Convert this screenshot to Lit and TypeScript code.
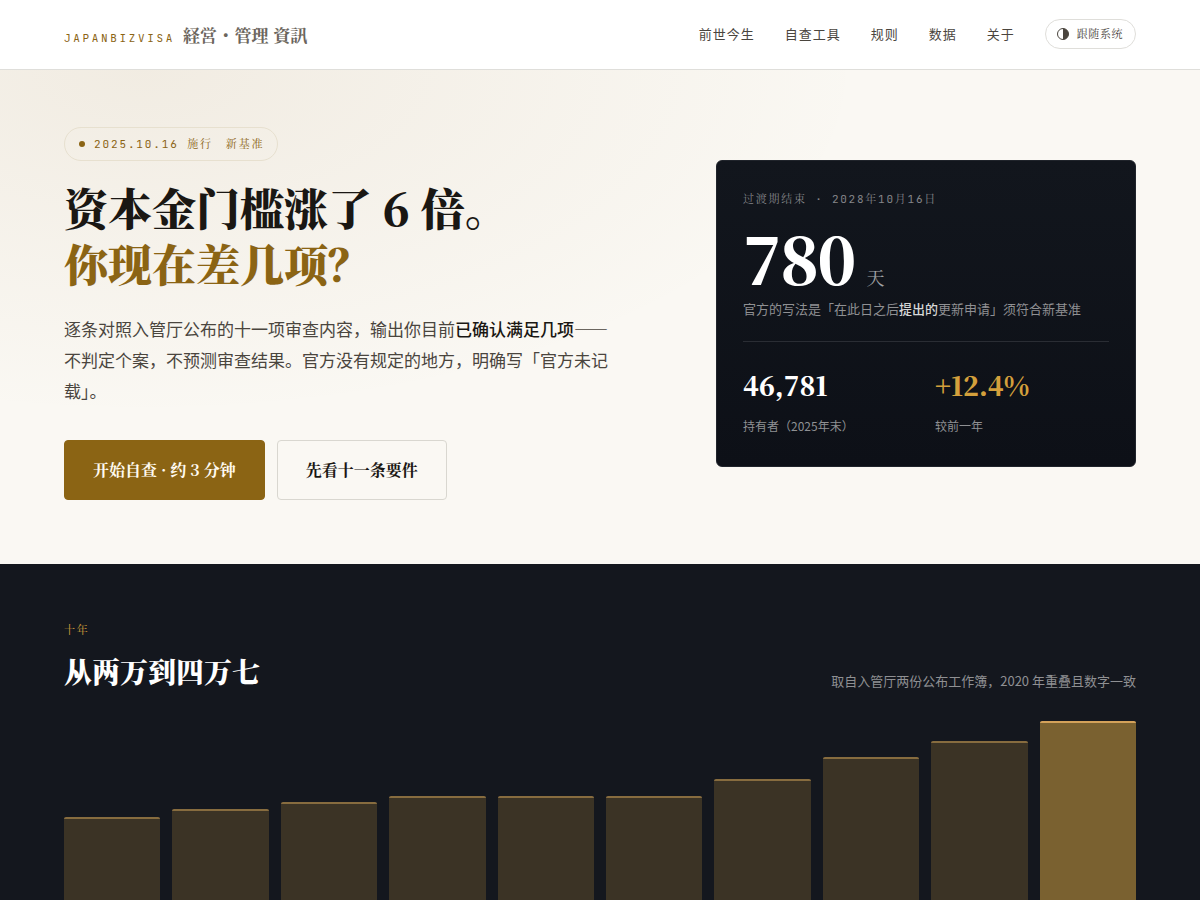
import { LitElement, html, css } from "lit";
import { customElement } from "lit/decorators.js";
import { classMap } from "lit/directives/class-map.js";

const holders = [
  { year: 2016, count: 21877 },
  { year: 2017, count: 24033 },
  { year: 2018, count: 25670 },
  { year: 2019, count: 27249 },
  { year: 2020, count: 27235 },
  { year: 2021, count: 27197 },
  { year: 2022, count: 31808 },
  { year: 2023, count: 37510 },
  { year: 2024, count: 41615 },
  { year: 2025, count: 46781 },
];
const peak = Math.max(...holders.map((h) => h.count));

@customElement("app-root")
export class AppRoot extends LitElement {
  static styles = css`
    :host {
      --serif: "Noto Serif CJK SC", "Liberation Serif", serif;
      --serif-jp: "Noto Serif CJK JP", "Liberation Serif", serif;
      --sans: "Noto Sans CJK SC", sans-serif;
      --mono: "JetBrains Mono", "Liberation Mono", "Noto Serif CJK SC", monospace;
      --gold: #8b6414;
      --ink: #1a1713;
      display: block;
      min-height: 100vh;
      background: #faf8f3;
      color: var(--ink);
      font-family: var(--sans);
    }
    * {
      box-sizing: border-box;
      margin: 0;
    }
    a {
      color: inherit;
      text-decoration: none;
    }
    .header {
      display: flex;
      align-items: center;
      justify-content: space-between;
      padding: 19px 64px 20px;
      background: #fff;
      border-bottom: 1px solid #dfdeda;
    }
    .brand {
      display: flex;
      align-items: baseline;
      gap: 8px;
      padding-top: 2px;
    }
    .brand-en {
      font: 400 11px/16px var(--mono);
      letter-spacing: 0.24em;
      color: var(--gold);
    }
    .brand-jp {
      font: 700 17px/24px var(--serif-jp);
      letter-spacing: 0.01em;
      color: #6b655c;
    }
    .nav {
      display: flex;
      align-items: center;
      gap: 30px;
      font-size: 13px;
      line-height: 20px;
      letter-spacing: 1px;
      color: #4a453e;
    }
    .theme {
      display: flex;
      align-items: center;
      gap: 8px;
      height: 30px;
      padding: 0 12px 0 11px;
      border: 1px solid #dfdeda;
      border-radius: 15px;
      background: none;
      color: #4a453e;
      font: 400 11px/16px var(--mono);
      letter-spacing: 0.05em;
    }
    .theme svg {
      width: 12px;
      height: 12px;
    }
    .hero {
      display: grid;
      grid-template-columns: minmax(0, 1fr) 420px;
      align-items: center;
      gap: 64px;
      padding: 57px 64px 64px;
      background: radial-gradient(ellipse 60% 70% at 12% 0, rgba(139, 95, 30, 0.08), transparent), #faf8f3;
    }
    .copy {
      display: flex;
      flex-direction: column;
      align-items: flex-start;
    }
    .pill {
      display: flex;
      align-items: center;
      gap: 9px;
      height: 34px;
      padding: 0 13px 0 14px;
      border: 1px solid #e7e0cf;
      border-radius: 17px;
      color: var(--gold);
      font: 400 11px/16px var(--mono);
      letter-spacing: 0.17em;
      white-space: pre;
    }
    .dot {
      width: 6px;
      height: 6px;
      border-radius: 50%;
      background: var(--gold);
    }
    .title {
      margin-top: 18px;
      font: 900 44px/56px var(--serif);
    }
    .accent {
      display: block;
      color: var(--gold);
    }
    .lead {
      max-width: 545px;
      margin-top: 22px;
      font-size: 17px;
      line-height: 31px;
      color: #4a453e;
    }
    .lead strong {
      font-weight: 500;
      color: var(--ink);
    }
    .actions {
      display: flex;
      gap: 12px;
      margin-top: 34px;
    }
    .button {
      display: flex;
      align-items: center;
      height: 60px;
      padding: 0 28px;
      border: 1px solid #d9d7d0;
      border-radius: 4px;
      font: 700 16px/24px var(--serif);
    }
    .primary {
      border-color: var(--gold);
      background: var(--gold);
      color: #fffaf0;
    }
    .card {
      padding: 28px 26px 30px;
      border: 1px solid #20242b;
      border-radius: 6px;
      background: linear-gradient(#12161d, #0d1017);
      color: #fff;
    }
    .card-label {
      font: 400 11px/20px var(--mono);
      letter-spacing: 0.16em;
      color: #85868a;
    }
    .count {
      display: flex;
      align-items: baseline;
      gap: 12px;
      margin: 16px 0 8px;
      font: 900 64px/64px var(--serif);
      letter-spacing: -0.03em;
    }
    .unit {
      font-size: 18px;
      font-weight: 400;
      line-height: 24px;
      letter-spacing: 0;
      color: #a1a2a5;
    }
    .card-note {
      font-size: 13px;
      line-height: 24px;
      color: #8f9093;
    }
    .card-note strong {
      font-weight: 500;
      color: #d6d7d8;
    }
    .stats {
      display: grid;
      grid-template-columns: 1fr 1fr;
      gap: 18px;
      margin-top: 20px;
      padding-top: 22px;
      border-top: 1px solid #2a2d34;
    }
    .stat-value {
      font: 900 26px/42px var(--serif);
    }
    .stat-up {
      color: #d4a03c;
    }
    .stat-label {
      margin-top: 10px;
      font-size: 12px;
      line-height: 20px;
      color: #8f9093;
    }
    .decade {
      padding: 56px 64px 0;
      background: #14171e;
      color: #fff;
    }
    .section-label {
      font: 400 11px/20px var(--mono);
      letter-spacing: 0.17em;
      color: #d4a03c;
    }
    .section-head {
      display: flex;
      align-items: flex-end;
      justify-content: space-between;
    }
    .section-title {
      margin-top: 10px;
      font: 900 28px/42px var(--serif);
    }
    .section-note {
      font-size: 13px;
      line-height: 22px;
      color: #8f9093;
    }
    .chart {
      display: flex;
      align-items: flex-end;
      gap: 12px;
      height: 180px;
      margin-top: 29px;
    }
    .bar {
      flex: 1;
      border-top: 2px solid #876c3f;
      border-radius: 2px 2px 0 0;
      background: #3b3325;
    }
    .latest {
      border-top-color: #d4a25a;
      background: #7a6130;
    }
  `;

  render() {
    return html`
      <header class="header">
        <a class="brand" href="#">
          <span class="brand-en">JAPANBIZVISA</span>
          <span class="brand-jp" lang="ja">経営・管理 資訊</span>
        </a>
        <nav class="nav">
          <a href="#history">前世今生</a>
          <a href="#check">自查工具</a>
          <a href="#rules">规则</a>
          <a href="#data">数据</a>
          <a href="#about">关于</a>
          <button class="theme" type="button">
            <svg viewBox="0 0 12 12" aria-hidden="true">
              <circle cx="6" cy="6" r="5.5" fill="none" stroke="currentColor" />
              <path d="M6 0.5a5.5 5.5 0 0 1 0 11z" fill="currentColor" />
            </svg>
            <span>跟随系统</span>
          </button>
        </nav>
      </header>
      <main lang="zh-CN">
        <section class="hero">
          <div class="copy">
            <p class="pill"><span class="dot"></span><span>2025.10.16 施行　新基准</span></p>
            <h1 class="title">资本金门槛涨了 6 倍。<span class="accent">你现在差几项？</span></h1>
            <p class="lead">逐条对照入管厅公布的十一项审查内容，输出你目前<strong>已确认满足几项</strong>——不判定个案，不预测审查结果。官方没有规定的地方，明确写「官方未记载」。</p>
            <div class="actions">
              <a class="button primary" href="#check">开始自查 · 约 3 分钟</a>
              <a class="button" href="#rules">先看十一条要件</a>
            </div>
          </div>
          <aside class="card">
            <p class="card-label">过渡期结束 · 2028年10月16日</p>
            <p class="count">780<span class="unit">天</span></p>
            <p class="card-note">官方的写法是「在此日之后<strong>提出的</strong>更新申请」须符合新基准</p>
            <div class="stats">
              <div>
                <p class="stat-value">46,781</p>
                <p class="stat-label">持有者（2025年末）</p>
              </div>
              <div>
                <p class="stat-value stat-up">+12.4%</p>
                <p class="stat-label">较前一年</p>
              </div>
            </div>
          </aside>
        </section>
        <section class="decade" id="data">
          <p class="section-label">十年</p>
          <div class="section-head">
            <h2 class="section-title">从两万到四万七</h2>
            <p class="section-note">取自入管厅两份公布工作簿，2020 年重叠且数字一致</p>
          </div>
          <div class="chart">
            ${holders.map(
              (h) => html`<div
                class=${classMap({ bar: true, latest: h.count === peak })}
                style="height:${(h.count / peak) * 100}%"
              ></div>`
            )}
          </div>
        </section>
      </main>
    `;
  }
}
